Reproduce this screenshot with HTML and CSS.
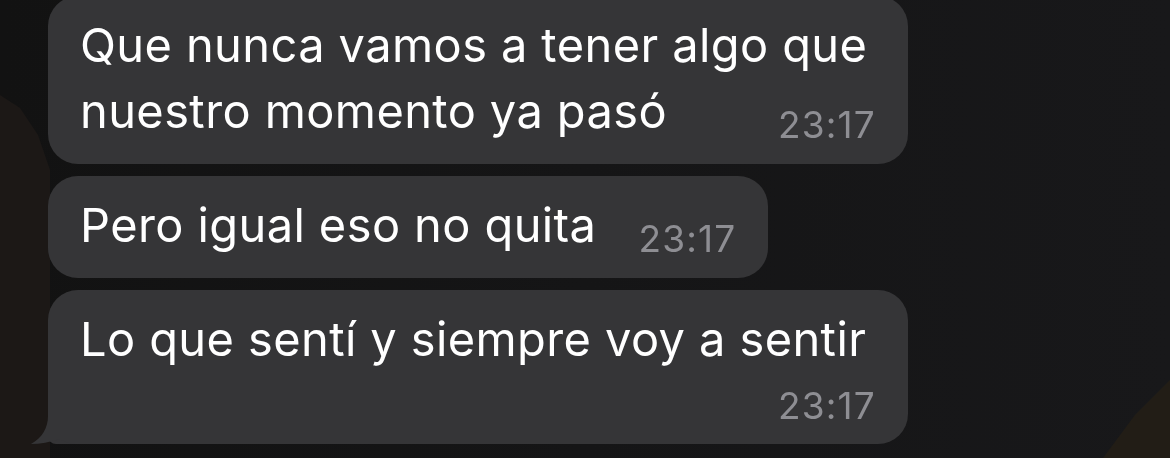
FILE: index.html
```html
<!DOCTYPE html>
<html lang="es">
<head>
  <meta charset="UTF-8">
  <meta name="viewport" content="width=device-width, initial-scale=1.0">
  <title>Chat</title>
  <link rel="stylesheet" href="styles.css">
</head>
<body>
  <div class="thread">
    <div class="bubble">
      Que nunca vamos a tener algo que nuestro momento ya pasó
      <span class="time">23:17</span>
    </div>

    <div class="bubble">
      Pero igual eso no quita
      <span class="time">23:17</span>
    </div>

    <div class="bubble bubble-last">
      Lo que sentí y siempre voy a sentir
      <span class="time time-below">23:17</span>
      <!-- cola de la burbuja -->
      <svg class="tail" width="50" height="50" viewBox="0 0 50 50">
        <path d="M20 0 L20 22 C20 34 14 44 3 50 C12 50 22 48 32 45 C37 48 42 50 50 50 L50 0 Z" fill="#353537"/>
      </svg>
    </div>
  </div>
</body>
</html>
```

FILE: styles.css
```css
body {
  margin: 0;
  height: 100vh;
  overflow: hidden;
  font-family: Inter, "Noto Sans", sans-serif;
  background: linear-gradient(to right, #121212, #18181a);
}

/* fondo de pantalla: manchas marrones */
body::before,
body::after {
  content: "";
  position: fixed;
  inset: 0;
  z-index: -1;
}

body::before {
  background-color: #1c1816;
  clip-path: polygon(0 95px, 20px 108px, 38px 135px, 50px 170px, 50px 100%, 0 100%);
}

body::after {
  background-color: #221d16;
  clip-path: polygon(1103px 100%, 1135px 415px, 1170px 380px, 100% 100%);
}

.thread {
  display: flex;
  flex-direction: column;
  align-items: flex-start;
  gap: 12px;
  margin-top: -4px;
  padding-left: 48px;
}

.bubble {
  position: relative;
  display: flow-root;
  max-width: 796px;
  padding: 16px 32px 20px 32px;
  background-color: #353537;
  border-radius: 30px;
  color: #fff;
  font-size: 47px;
  line-height: 66px;
  letter-spacing: 0.4px;
}

.time {
  float: right;
  margin: 29px 0 0 42px;
  color: #8e8e93;
  font-size: 37px;
  line-height: 36px;
  letter-spacing: 1.2px;
}

.time-below {
  margin-top: 16px;
}

.bubble-last {
  border-bottom-left-radius: 8px;
}

.tail {
  position: absolute;
  left: -20px;
  bottom: 0;
}
```
